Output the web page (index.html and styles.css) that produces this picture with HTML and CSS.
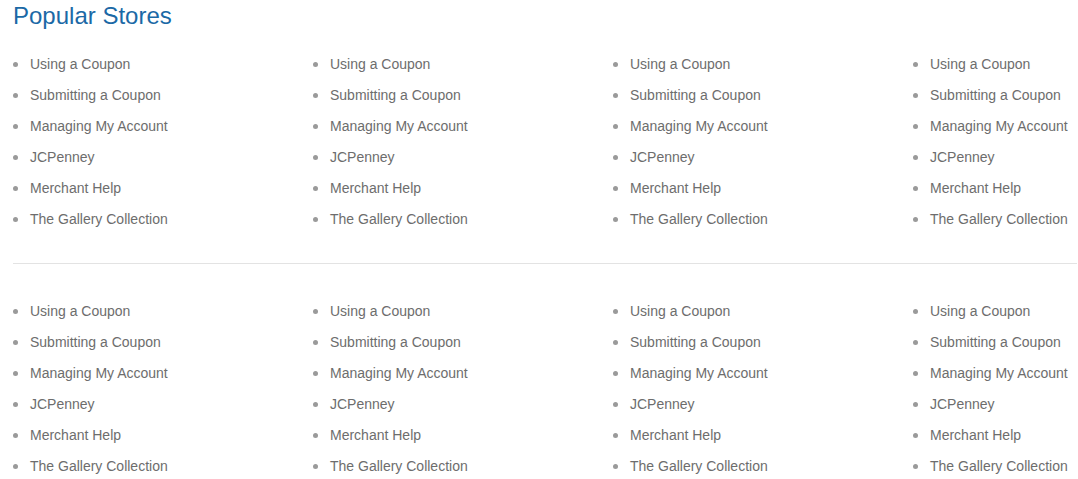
FILE: index.html
```html
<!DOCTYPE html>
<html>
<head>
<meta charset="utf-8">
<link rel="stylesheet" href="styles.css">
</head>
<body>
<div class="page">
  <h2 class="title">Popular Stores</h2>
  <div class="block">
    <ul class="col"><li>Using a Coupon</li><li>Submitting a Coupon</li><li>Managing My Account</li><li>JCPenney</li><li>Merchant Help</li><li>The Gallery Collection</li></ul>
    <ul class="col"><li>Using a Coupon</li><li>Submitting a Coupon</li><li>Managing My Account</li><li>JCPenney</li><li>Merchant Help</li><li>The Gallery Collection</li></ul>
    <ul class="col"><li>Using a Coupon</li><li>Submitting a Coupon</li><li>Managing My Account</li><li>JCPenney</li><li>Merchant Help</li><li>The Gallery Collection</li></ul>
    <ul class="col"><li>Using a Coupon</li><li>Submitting a Coupon</li><li>Managing My Account</li><li>JCPenney</li><li>Merchant Help</li><li>The Gallery Collection</li></ul>
  </div>
  <hr class="divider">
  <div class="block">
    <ul class="col"><li>Using a Coupon</li><li>Submitting a Coupon</li><li>Managing My Account</li><li>JCPenney</li><li>Merchant Help</li><li>The Gallery Collection</li></ul>
    <ul class="col"><li>Using a Coupon</li><li>Submitting a Coupon</li><li>Managing My Account</li><li>JCPenney</li><li>Merchant Help</li><li>The Gallery Collection</li></ul>
    <ul class="col"><li>Using a Coupon</li><li>Submitting a Coupon</li><li>Managing My Account</li><li>JCPenney</li><li>Merchant Help</li><li>The Gallery Collection</li></ul>
    <ul class="col"><li>Using a Coupon</li><li>Submitting a Coupon</li><li>Managing My Account</li><li>JCPenney</li><li>Merchant Help</li><li>The Gallery Collection</li></ul>
  </div>
</div>
</body>
</html>
```
FILE: styles.css
```css
html, body {
  margin: 0;
  padding: 0;
  background: #fff;
}
body {
  font-family: "Liberation Sans", Arial, sans-serif;
}
.page {
  padding: 0 1px 0 13px;
}
.title {
  margin: 3px 0 0;
  font-size: 24px;
  line-height: 26px;
  font-weight: normal;
  color: #1b69a6;
}
.block {
  display: grid;
  grid-template-columns: 300px 300px 300px 1fr;
  margin-top: 20px;
}
.col {
  list-style: none;
  margin: 0;
  padding: 0;
}
.col li {
  position: relative;
  padding-left: 17px;
  font-size: 14px;
  line-height: 31px;
  color: #6d6d6d;
  white-space: nowrap;
}
.col li::before {
  content: "";
  position: absolute;
  left: 0;
  top: 13px;
  width: 5px;
  height: 5px;
  border-radius: 50%;
  background: #9a9a9a;
}
.divider {
  border: 0;
  border-top: 1px solid #e3e3e3;
  margin: 28px 0 0;
  height: 0;
}
.divider + .block {
  margin-top: 32px;
}
```
